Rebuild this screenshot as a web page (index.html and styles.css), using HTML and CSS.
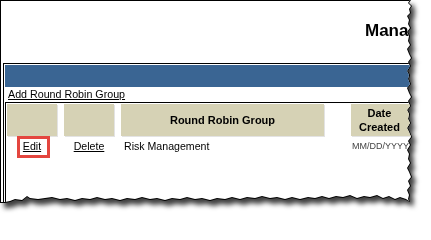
FILE: index.html
```html
<!DOCTYPE html>
<html lang="en">
<head>
<meta charset="utf-8">
<title>Manage Round Robin Groups</title>
<link rel="stylesheet" href="styles.css">
</head>
<body>
<div class="shadow">
  <div class="edge">
    <div class="paper">
      <div class="title">Manage Round Robin Groups</div>
      <div class="panel">
        <div class="bar"></div>
        <div class="addline"><a class="link" href="#">Add Round Robin Group</a></div>
        <div class="table">
          <div class="th"></div>
          <div class="th"></div>
          <div class="th">Round Robin Group</div>
          <div class="th th-date">Date<br>Created</div>
          <div class="td center"><a class="link" href="#">Edit</a></div>
          <div class="td center"><a class="link" href="#">Delete</a></div>
          <div class="td">Risk Management</div>
          <div class="td td-date">MM/DD/YYYY</div>
        </div>
      </div>
      <div class="highlight"></div>
    </div>
  </div>
</div>
</body>
</html>
```
FILE: styles.css
```css
html, body {
  margin: 0;
  padding: 0;
  background: #fff;
}
body {
  width: 431px;
  height: 221px;
  overflow: hidden;
  font-family: "Liberation Sans", Arial, sans-serif;
}
.shadow {
  width: 414px;
  height: 205px;
  filter: drop-shadow(4px 5px 2.5px rgba(0, 0, 0, 0.75));
}
.edge {
  width: 414px;
  height: 205px;
  background: #000;
  clip-path: polygon(0px 0px, 411px 0px, 409px 3px, 412px 6px, 410px 9px, 411px 13px, 408px 16px, 410px 20px, 409px 24px, 411px 28px, 408px 32px, 410px 36px, 409px 41px, 411px 45px, 408px 49px, 410px 54px, 412px 58px, 409px 62px, 411px 66px, 408px 71px, 410px 75px, 409px 79px, 411px 84px, 408px 88px, 410px 93px, 412px 97px, 409px 101px, 411px 106px, 408px 110px, 410px 114px, 409px 119px, 411px 123px, 408px 128px, 410px 132px, 412px 137px, 409px 141px, 411px 145px, 408px 150px, 410px 154px, 409px 159px, 411px 163px, 408px 168px, 410px 172px, 412px 177px, 409px 181px, 411px 186px, 408px 190px, 410px 195px, 409px 199px, 410px 202px, 406px 200px, 400px 198px, 395px 200px, 389px 197px, 383px 199px, 377px 196px, 370px 198px, 364px 197px, 357px 199px, 350px 196px, 343px 198px, 336px 197px, 329px 199px, 322px 197px, 315px 199px, 308px 198px, 300px 200px, 292px 198px, 285px 200px, 277px 198px, 270px 199px, 262px 197px, 255px 199px, 247px 198px, 240px 200px, 232px 198px, 225px 200px, 217px 199px, 210px 201px, 202px 199px, 195px 200px, 187px 198px, 180px 200px, 172px 199px, 165px 201px, 157px 199px, 150px 200px, 142px 198px, 135px 200px, 127px 199px, 120px 201px, 112px 199px, 105px 200px, 97px 198px, 90px 200px, 82px 199px, 75px 201px, 67px 199px, 60px 200px, 52px 198px, 45px 199px, 38px 200px, 30px 199px, 27px 197px, 22px 201px, 15px 200px, 10px 202px, 5px 203px, 0px 203px);
}
.paper {
  position: relative;
  box-sizing: border-box;
  width: 414px;
  height: 205px;
  background: #fff;
  border-top: 1px solid #000;
  border-left: 1px solid #000;
  overflow: hidden;
  clip-path: polygon(0px 0px, 410px 0px, 408px 3px, 411px 6px, 409px 9px, 410px 13px, 407px 16px, 409px 20px, 408px 24px, 410px 28px, 407px 32px, 409px 36px, 408px 41px, 410px 45px, 407px 49px, 409px 54px, 411px 58px, 408px 62px, 410px 66px, 407px 71px, 409px 75px, 408px 79px, 410px 84px, 407px 88px, 409px 93px, 411px 97px, 408px 101px, 410px 106px, 407px 110px, 409px 114px, 408px 119px, 410px 123px, 407px 128px, 409px 132px, 411px 137px, 408px 141px, 410px 145px, 407px 150px, 409px 154px, 408px 159px, 410px 163px, 407px 168px, 409px 172px, 411px 177px, 408px 181px, 410px 186px, 407px 190px, 409px 195px, 408px 199px, 409px 201px, 406px 199px, 400px 197px, 395px 199px, 389px 196px, 383px 198px, 377px 195px, 370px 197px, 364px 196px, 357px 198px, 350px 195px, 343px 197px, 336px 196px, 329px 198px, 322px 196px, 315px 198px, 308px 197px, 300px 199px, 292px 197px, 285px 199px, 277px 197px, 270px 198px, 262px 196px, 255px 198px, 247px 197px, 240px 199px, 232px 197px, 225px 199px, 217px 198px, 210px 200px, 202px 198px, 195px 199px, 187px 197px, 180px 199px, 172px 198px, 165px 200px, 157px 198px, 150px 199px, 142px 197px, 135px 199px, 127px 198px, 120px 200px, 112px 198px, 105px 199px, 97px 197px, 90px 199px, 82px 198px, 75px 200px, 67px 198px, 60px 199px, 52px 197px, 45px 198px, 38px 199px, 30px 198px, 27px 196px, 22px 200px, 15px 199px, 10px 201px, 5px 202px, 0px 202px);
}
.title {
  box-sizing: border-box;
  height: 62px;
  padding: 20px 0 0 364px;
  font-weight: bold;
  font-size: 17px;
  line-height: 20px;
  color: #000;
  white-space: nowrap;
}
.panel {
  margin-left: 2px;
  border-top: 1px solid #000;
  border-left: 1px solid #000;
  padding: 1px 0 0 1px;
  height: 200px;
}
.bar {
  height: 22px;
  background: #3a6593;
}
.addline {
  height: 15px;
  padding-left: 3px;
  font-size: 10.7px;
  line-height: 14px;
}
.link {
  color: #000;
  text-decoration: underline;
}
.table {
  border-top: 1px solid #000;
  border-left: 1px solid #000;
  padding: 1px 0 0 1px;
  display: grid;
  grid-template-columns: 50px 50px 203px 80px;
  grid-template-rows: 32px auto;
  column-gap: 7px;
  height: 120px;
  align-content: start;
  font-size: 10.6px;
}
.th {
  background: #d6d2b5;
  box-shadow: 1px 1px 0 #e3e3e3;
  font-weight: bold;
  font-size: 11px;
  line-height: 14px;
  display: flex;
  align-items: center;
  justify-content: center;
  text-align: center;
}
.th-date,
.td-date {
  margin-left: 20px;
}
.th-date {
  justify-content: flex-start;
  padding-left: 8px;
}
.td {
  padding: 3px 0 0 3px;
  line-height: 14px;
  color: #000;
  white-space: nowrap;
}
.center {
  padding-left: 0;
  text-align: center;
}
.td-date {
  padding-left: 1px;
  font-size: 9px;
  color: #444;
}
.highlight {
  position: absolute;
  left: 16px;
  top: 135px;
  width: 27px;
  height: 16px;
  border: 3px solid #e4463f;
}
```
